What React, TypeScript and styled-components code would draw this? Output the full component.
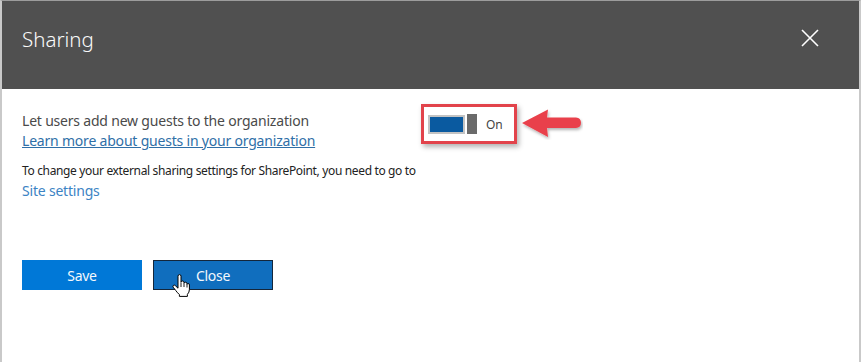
import React from "react";
import styled, { createGlobalStyle } from "styled-components";

const Global = createGlobalStyle`
  html, body { margin: 0; padding: 0; background: #fff; }
  body { font-family: "Noto Sans", "Open Sans", sans-serif; }
`;

const Frame = styled.div`
  width: 861px;
  height: 362px;
  box-sizing: border-box;
  border-top: 1px solid #9c9c9c;
  border-left: 2px solid #c9c9c9;
  border-right: 2px solid #c9c9c9;
  background: #fff;
  display: flex;
  flex-direction: column;
  overflow: hidden;
`;

const Header = styled.header`
  height: 88px;
  flex: none;
  background: #505050;
  display: flex;
  align-items: flex-start;
  justify-content: space-between;
  padding: 21px 40px 0 20px;
  box-sizing: border-box;
`;

const Title = styled.h1`
  margin: 0;
  font-family: "Noto Sans", sans-serif;
  font-weight: 300;
  font-size: 20.5px;
  line-height: 34px;
  color: #fafafa;
`;

const CloseIcon = styled.button`
  border: 0;
  background: transparent;
  padding: 0;
  margin-top: 7px;
  width: 18px;
  height: 18px;
  display: flex;
  cursor: pointer;
`;

const Body = styled.main`
  padding: 15px 0 0 20px;
  display: flex;
  flex-direction: column;
`;

const SettingRow = styled.div`
  display: flex;
  align-items: flex-start;
`;

const SettingText = styled.div`
  width: 399px;
  padding-top: 7px;
  display: flex;
  flex-direction: column;
`;

const Label = styled.span<{ $size?: number }>`
  font-size: ${(p) => p.$size ?? 14}px;
  line-height: 20px;
  color: ${(p) => ((p.$size ?? 14) < 14 ? "#222" : "#4a4a4a")};
  letter-spacing: ${(p) => ((p.$size ?? 14) < 14 ? "-0.35px" : "-0.2px")};
  white-space: nowrap;
`;

const Link = styled.a<{ $underline?: boolean; $tone?: string }>`
  font-size: 14px;
  line-height: 20px;
  color: ${(p) => p.$tone ?? "#2f6fa7"};
  text-decoration: ${(p) => (p.$underline ? "underline" : "none")};
  letter-spacing: -0.2px;
  white-space: nowrap;
  align-self: flex-start;
`;

const Callout = styled.div`
  display: flex;
  align-items: center;
  gap: 4px;
`;

const Highlight = styled.div`
  width: 96px;
  height: 40px;
  box-sizing: border-box;
  border: 3px solid #e2434b;
  box-shadow: 2px 3px 5px rgba(0, 0, 0, 0.3);
  display: flex;
  align-items: center;
  padding-left: 4px;
  gap: 9px;
`;

const Switch = styled.div`
  display: flex;
  align-items: center;
  gap: 2px;
`;

const Track = styled.div`
  width: 37px;
  height: 19px;
  box-sizing: border-box;
  border: 2px solid #c3c3c3;
  background: #0a5aa0;
`;

const Thumb = styled.div`
  width: 10px;
  height: 20px;
  background: #6a6a6a;
`;

const SwitchLabel = styled.span`
  font-size: 12px;
  color: #444;
  letter-spacing: -0.2px;
`;

const SiteBlock = styled.div`
  margin-top: 10px;
  display: flex;
  flex-direction: column;
`;

const Actions = styled.div`
  margin-top: 59px;
  display: flex;
  gap: 11px;
`;

const Button = styled.button<{ $active?: boolean }>`
  position: relative;
  width: 120px;
  height: 30px;
  box-sizing: border-box;
  border: 1px solid ${(p) => (p.$active ? "#14263a" : "#0078d7")};
  background: ${(p) => (p.$active ? "#106ebe" : "#0078d7")};
  color: #f4f8fc;
  font-family: "Noto Sans", sans-serif;
  font-size: 14px;
  letter-spacing: -0.3px;
  padding: 0;
  cursor: pointer;
`;

const Pointer = styled.svg`
  position: absolute;
  left: 18px;
  top: 13px;
`;

const Arrow = () => (
  <svg width="62" height="32" viewBox="0 0 62 32">
    <defs>
      <filter id="sh" x="-20%" y="-30%" width="140%" height="160%">
        <feDropShadow dx="1" dy="2" stdDeviation="1.5" floodColor="#000" floodOpacity="0.3" />
      </filter>
    </defs>
    <g filter="url(#sh)">
      <path d="M1 15 L27 1.5 L26 9.5 L55 9.5 Q60 10 60 14.8 Q60 19.5 55 20 L26 20 L27 29 Z" fill="#e9414b" />
    </g>
  </svg>
);

export default function App() {
  return (
    <>
      <Global />
      <Frame>
        <Header>
          <Title>Sharing</Title>
          <CloseIcon aria-label="Close">
            <svg width="18" height="18" viewBox="0 0 18 18">
              <path d="M1 1 L17 17 M17 1 L1 17" stroke="#fff" strokeWidth="1.6" />
            </svg>
          </CloseIcon>
        </Header>
        <Body>
          <SettingRow>
            <SettingText>
              <Label>Let users add new guests to the organization</Label>
              <Link href="#" $underline>
                Learn more about guests in your organization
              </Link>
            </SettingText>
            <Callout>
              <Highlight>
                <Switch>
                  <Track />
                  <Thumb />
                </Switch>
                <SwitchLabel>On</SwitchLabel>
              </Highlight>
              <Arrow />
            </Callout>
          </SettingRow>
          <SiteBlock>
            <Label $size={12}>
              To change your external sharing settings for SharePoint, you need to go to
            </Label>
            <Link href="#" $tone="#3c83c4">
              Site settings
            </Link>
          </SiteBlock>
          <Actions>
            <Button>Save</Button>
            <Button $active>
              Close
              <Pointer width="18" height="23" viewBox="0 0 18 23">
                <path
                  d="M6 2.2 Q6 0.6 7.5 0.6 Q9 0.6 9 2.2 V8.2 Q9.2 7 10.5 7 Q12 7 12 8.6 V9.2 Q12.3 8.2 13.5 8.2 Q15 8.2 15 9.8 V10.4 Q15.3 9.5 16.2 9.5 Q17.4 9.5 17.4 11 V15.5 Q17.4 18.3 15.4 20.4 V22.4 H7.4 V20.6 Q5.6 19 3.8 16.6 L1.2 13.2 Q0.5 12 1.4 11.4 Q2.4 10.7 3.4 11.7 L6 14.2 Z"
                  fill="#fff"
                  stroke="#000"
                  strokeWidth="1"
                  strokeLinejoin="round"
                />
                <path d="M9 8.5 V13 M12 9.2 V13 M15 10.4 V13.5" stroke="#000" strokeWidth="0.9" fill="none" />
              </Pointer>
            </Button>
          </Actions>
        </Body>
      </Frame>
    </>
  );
}
